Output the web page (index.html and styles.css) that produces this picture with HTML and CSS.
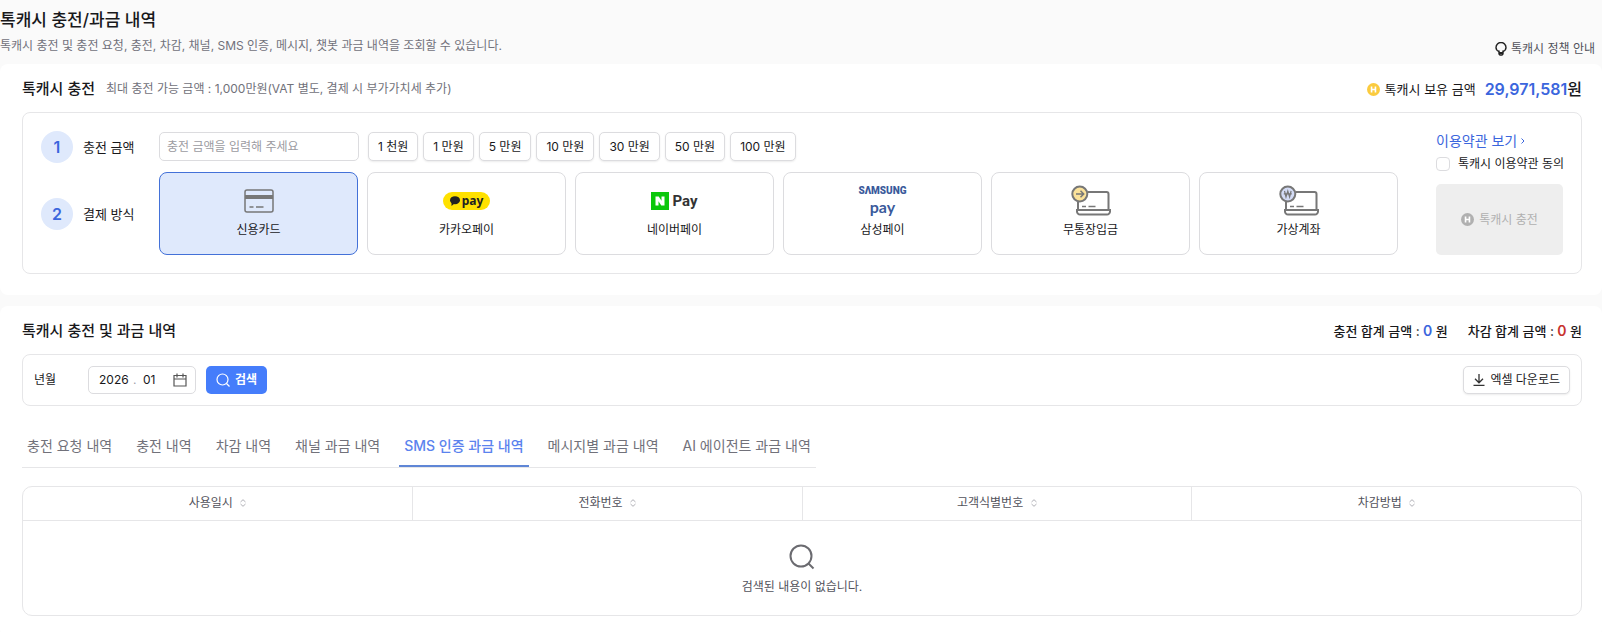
FILE: index.html
```html
<!DOCTYPE html>
<html lang="ko">
<head>
    <meta charset="UTF-8">
    <meta name="viewport" content="width=device-width, initial-scale=1.0">
    <title>톡캐시 충전/과금 내역</title>
    <link rel="stylesheet" href="styles.css">
</head>
<body>

<header class="page-header">
    <div>
        <h1>톡캐시 충전/과금 내역</h1>
        <p>톡캐시 충전 및 충전 요청, 충전, 차감, 채널, SMS 인증, 메시지, 챗봇 과금 내역을 조회할 수 있습니다.</p>
    </div>
    <a href="#" class="policy-link">
        <svg width="12" height="14" viewBox="0 0 12 14" fill="none" stroke="#222" stroke-width="1.4">
            <path d="M4 9.6C2.2 8.8 1 7.300 1 5.500a5 5 0 0 1 10 0c0 1.800-1.200 3.300-3 4.100"/>
            <path d="M4 8.500v3.500l1 1h2l1-1v-3.500"/>
            <path d="M4 11h4" stroke-width="2"/>
        </svg>
        톡캐시 정책 안내
    </a>
</header>

<main>
    <section class="card">
        <div class="card-head">
            <h2>톡캐시 충전</h2>
            <span class="hint">최대 충전 가능 금액 : 1,000만원(VAT 별도, 결제 시 부가가치세 추가)</span>
            <div class="balance">
                <svg width="13" height="13" viewBox="0 0 12 12">
                    <circle cx="6" cy="6" r="6" fill="#fbcb3e"/>
                    <path d="M4.200 3.300v5.400M7.800 3.300v5.400M4.200 6h3.600" stroke="#fff" stroke-width="1.500"/>
                </svg>
                <span>톡캐시 보유 금액</span>
                <strong><em>29,971,581</em>원</strong>
            </div>
        </div>

        <form class="panel charge">
            <div class="charge-steps">
                <div class="step"><span class="step-num">1</span><label for="amount">충전 금액</label></div>
                <div class="amounts">
                    <input type="text" id="amount" class="amount-input" placeholder="충전 금액을 입력해 주세요">
                    <div class="quick">
                        <button type="button" class="btn">1 천원</button>
                        <button type="button" class="btn">1 만원</button>
                        <button type="button" class="btn">5 만원</button>
                        <button type="button" class="btn">10 만원</button>
                        <button type="button" class="btn">30 만원</button>
                        <button type="button" class="btn">50 만원</button>
                        <button type="button" class="btn">100 만원</button>
                    </div>
                </div>

                <div class="step"><span class="step-num">2</span><span>결제 방식</span></div>
                <div class="methods">
                    <label class="method">
                        <input type="radio" name="method" checked>
                        <span class="method-icon">
                            <svg width="30" height="24" viewBox="0 0 30 24" fill="none" stroke="#777">
                                <rect x="1" y="1" width="28" height="22" rx="2" stroke-width="1.500"/>
                                <path d="M1 8h28" stroke-width="4"/>
                                <path d="M5.500 18h4M12 18h7.500" stroke-width="1.500"/>
                            </svg>
                        </span>
                        <span>신용카드</span>
                    </label>
                    <label class="method">
                        <input type="radio" name="method">
                        <span class="method-icon">
                            <span class="kakao">
                                <svg width="10" height="10" viewBox="0 0 10 10" fill="#222">
                                    <ellipse cx="5" cy="4.200" rx="5" ry="4"/>
                                    <path d="M1.500 6v4l3-2.500z"/>
                                </svg>
                                pay
                            </span>
                        </span>
                        <span>카카오페이</span>
                    </label>
                    <label class="method">
                        <input type="radio" name="method">
                        <span class="method-icon">
                            <span class="naver">
                                <svg width="18" height="18" viewBox="0 0 18 18">
                                    <rect width="18" height="18" fill="#0bc70b"/>
                                    <path d="M4.500 4.500h3.200l2.800 4.200V4.500h3v9h-3.200L7.500 9.300v4.200h-3z" fill="#fff"/>
                                </svg>
                                Pay
                            </span>
                        </span>
                        <span>네이버페이</span>
                    </label>
                    <label class="method">
                        <input type="radio" name="method">
                        <span class="method-icon">
                            <span class="samsung"><b>SΛMSUNG</b><i>pay</i></span>
                        </span>
                        <span>삼성페이</span>
                    </label>
                    <label class="method">
                        <input type="radio" name="method">
                        <span class="method-icon">
                            <svg width="40" height="32" viewBox="0 0 40 32" fill="none" stroke="#777" stroke-width="2">
                                <path d="M17 7h18.500a2 2 0 0 1 2 2v15M7 17v7"/>
                                <path d="M6 25h33v1.500a3 3 0 0 1-3 3H9a3 3 0 0 1-3-3z"/>
                                <path d="M11 21.500h4M17.500 21.500h7" stroke-width="1.500"/>
                                <circle cx="8.800" cy="9" r="7.500" fill="#fbe29a"/>
                                <path d="M5 9h7.500M9.500 5.800L12.700 9l-3.200 3.200" stroke-width="1.500"/>
                            </svg>
                        </span>
                        <span>무통장입금</span>
                    </label>
                    <label class="method">
                        <input type="radio" name="method">
                        <span class="method-icon">
                            <svg width="40" height="32" viewBox="0 0 40 32" fill="none" stroke="#777" stroke-width="2">
                                <path d="M17 7h18.500a2 2 0 0 1 2 2v15M7 17v7"/>
                                <path d="M6 25h33v1.500a3 3 0 0 1-3 3H9a3 3 0 0 1-3-3z"/>
                                <path d="M11 21.500h4M17.500 21.500h7" stroke-width="1.500"/>
                                <circle cx="8.800" cy="9" r="7.500" fill="#d3dbf5"/>
                                <path d="M5.500 6l1.500 6 1.800-6 1.800 6 1.500-6M4.800 8.800h8" stroke-width="1.200"/>
                            </svg>
                        </span>
                        <span>가상계좌</span>
                    </label>
                </div>
            </div>

            <div class="agree">
                <a href="#" class="terms-link">이용약관 보기
                    <svg width="4" height="6" viewBox="0 0 4 6" fill="none" stroke="#3b66dd"><path d="M.5.5L3 3 .5 5.500"/></svg>
                </a>
                <label class="agree-check"><input type="checkbox">톡캐시 이용약관 동의</label>
                <button type="submit" class="charge-btn" disabled>
                    <svg width="13" height="13" viewBox="0 0 12 12">
                        <circle cx="6" cy="6" r="6" fill="#b0b0b0"/>
                        <path d="M4.200 3.300v5.400M7.800 3.300v5.400M4.200 6h3.600" stroke="#fff" stroke-width="1.500"/>
                    </svg>
                    톡캐시 충전
                </button>
            </div>
        </form>
    </section>

    <section class="card history">
        <div class="card-head">
            <h2>톡캐시 충전 및 과금 내역</h2>
            <div class="totals">
                <span>충전 합계 금액 : <b class="plus">0</b> 원</span>
                <span>차감 합계 금액 : <b class="minus">0</b> 원</span>
            </div>
        </div>

        <form class="panel search">
            <label for="year" class="search-label">년월</label>
            <div class="month-field">
                <input type="text" id="year" class="year" value="2026">
                <span class="dot">.</span>
                <input type="text" class="month" value="01" aria-label="월">
                <button type="button" aria-label="달력">
                    <svg width="14" height="14" viewBox="0 0 14 14" fill="none" stroke="#555" stroke-width="1.200">
                        <path d="M1 2.500h12v10.500H1zM1 6h12M4 .5v4M10 .5v4"/>
                    </svg>
                </button>
            </div>
            <button type="button" class="search-btn">
                <svg width="14" height="14" viewBox="0 0 14 14" fill="none" stroke="#fff" stroke-width="1.200">
                    <circle cx="6.500" cy="6.500" r="5.500"/><path d="M10.500 10.500l3 3"/>
                </svg>
                검색
            </button>
            <button type="button" class="btn excel-btn">
                <svg width="12" height="12" viewBox="0 0 12 12" fill="none" stroke="#333" stroke-width="1.300">
                    <path d="M6 0v8.500M2 4.800l4 4 4-4M.5 11.300h11"/>
                </svg>
                엑셀 다운로드
            </button>
        </form>

        <nav class="tabs">
            <a href="#">충전 요청 내역</a>
            <a href="#">충전 내역</a>
            <a href="#">차감 내역</a>
            <a href="#">채널 과금 내역</a>
            <a href="#" class="active">SMS 인증 과금 내역</a>
            <a href="#">메시지별 과금 내역</a>
            <a href="#">AI 에이전트 과금 내역</a>
        </nav>

        <div class="table-wrap">
            <table>
                <thead>
                    <tr>
                        <th>사용일시 <svg class="sort" width="6" height="8" viewBox="0 0 6 8"><path d="M.5 3L3 .7 5.500 3M.5 5L3 7.300 5.500 5"/></svg></th>
                        <th>전화번호 <svg class="sort" width="6" height="8" viewBox="0 0 6 8"><path d="M.5 3L3 .7 5.500 3M.5 5L3 7.300 5.500 5"/></svg></th>
                        <th>고객식별번호 <svg class="sort" width="6" height="8" viewBox="0 0 6 8"><path d="M.5 3L3 .7 5.500 3M.5 5L3 7.300 5.500 5"/></svg></th>
                        <th>차감방법 <svg class="sort" width="6" height="8" viewBox="0 0 6 8"><path d="M.5 3L3 .7 5.500 3M.5 5L3 7.300 5.500 5"/></svg></th>
                    </tr>
                </thead>
                <tbody>
                    <tr>
                        <td colspan="4" class="empty">
                            <svg width="26" height="26" viewBox="0 0 26 26" fill="none" stroke="#6b6b70" stroke-width="2">
                                <circle cx="12" cy="12" r="10.500"/><path d="M19.500 19.500l5 5"/>
                            </svg>
                            <p>검색된 내용이 없습니다.</p>
                        </td>
                    </tr>
                </tbody>
            </table>
        </div>
    </section>
</main>

</body>
</html>
```
FILE: styles.css
```css
/* Global styles */
* {
    box-sizing: border-box;
}
body {
    margin: 0;
    background-color: #fafafa;
    color: #18181b;
    font-family: Inter, "Noto Sans CJK KR", sans-serif;
    font-size: 12px;
    line-height: 20px;
}
h1, h2, p {
    margin: 0;
}
h1 {
    font-size: 17px;
    font-weight: 500;
    line-height: 26px;
}
h2 {
    font-size: 15px;
    font-weight: 500;
}
a {
    color: inherit;
    text-decoration: none;
}
input, button {
    font: inherit;
    color: inherit;
}
button {
    cursor: pointer;
}

/* Page header */
.page-header {
    display: flex;
    justify-content: space-between;
    align-items: flex-end;
    padding: 7px 7px 5px 0;
}
.page-header p {
    padding: 3px 0;
    color: #71717a;
}
.policy-link {
    display: flex;
    align-items: center;
    gap: 4px;
    color: #52525b;
}

/* Cards */
.card {
    background-color: #fff;
    border-radius: 8px;
    padding: 15px 20px 21px 22px;
    margin-bottom: 11px;
}
.card-head {
    display: flex;
    align-items: center;
    margin-bottom: 13px;
}
.panel {
    border: 1px solid #e6e6e8;
    border-radius: 8px;
}
.hint {
    margin-left: 11px;
    color: #71717a;
}
.balance {
    display: flex;
    align-items: center;
    gap: 5px;
    margin-left: auto;
    font-size: 13px;
}
.balance strong {
    margin-left: 4px;
    font-size: 16px;
    font-weight: 500;
}
.balance em {
    font-style: normal;
    font-weight: 600;
    color: #3b66dd;
}

/* Charge form */
.charge {
    display: flex;
    gap: 38px;
    padding: 18px;
}
.charge-steps {
    flex: 1;
    display: grid;
    grid-template-columns: 108px 1fr;
    gap: 9px 10px;
    align-items: center;
}
.step {
    display: flex;
    align-items: center;
    gap: 10px;
    font-size: 13px;
}
.step-num {
    width: 32px;
    height: 32px;
    border-radius: 50%;
    background-color: #dfe9fc;
    color: #3b66dd;
    font-size: 16px;
    font-weight: 600;
    line-height: 32px;
    text-align: center;
}
.amounts {
    display: flex;
    gap: 9px;
    padding-bottom: 1px;
}
.amount-input {
    width: 200px;
    height: 29px;
    padding: 0 7px;
    border: 1px solid #dcdcdf;
    border-radius: 5px;
    background-color: #fff;
}
.amount-input::placeholder {
    color: #9b9ba1;
}
.quick {
    display: flex;
    gap: 5px;
}
.btn {
    height: 29px;
    padding: 0 9px;
    border: 1px solid #dcdcdf;
    border-radius: 5px;
    background-color: #fff;
    box-shadow: 0 1px 2px rgba(0, 0, 0, 0.08);
}
.methods {
    display: grid;
    grid-template-columns: repeat(6, 1fr);
    gap: 9px;
}
.method {
    display: flex;
    flex-direction: column;
    align-items: center;
    gap: 1px;
    height: 83px;
    padding-top: 9px;
    border: 1px solid #dcdcdf;
    border-radius: 8px;
    cursor: pointer;
}
.method:has(input:checked) {
    border-color: #4371d8;
    background-color: #dfe9fc;
}
.method input {
    appearance: none;
    width: 0;
    height: 0;
    margin: 0;
}
.method-icon {
    display: flex;
    align-items: center;
    height: 36px;
}
.kakao {
    display: flex;
    align-items: center;
    gap: 2px;
    height: 18px;
    padding: 0 7px;
    border-radius: 9px;
    background-color: #ffe100;
    color: #222;
    font-family: "Noto Sans", sans-serif;
    font-weight: 700;
    line-height: 16px;
}
.naver {
    display: flex;
    align-items: center;
    gap: 3px;
    color: #333;
    font-family: Roboto, sans-serif;
    font-size: 15px;
    font-weight: 700;
}
.samsung {
    display: flex;
    flex-direction: column;
    align-items: center;
    color: #3a5a9b;
}
.samsung b {
    font-family: Roboto, sans-serif;
    font-size: 10px;
    font-weight: 900;
    line-height: 12px;
}
.samsung i {
    font-family: Lato, sans-serif;
    font-size: 16px;
    font-style: normal;
    font-weight: 700;
    line-height: 20px;
}

/* Terms agreement */
.agree {
    display: flex;
    flex-direction: column;
    width: 127px;
}
.terms-link {
    display: flex;
    align-items: center;
    gap: 4px;
    font-size: 14px;
    color: #3b66dd;
}
.agree-check {
    display: flex;
    align-items: center;
    gap: 8px;
    margin: 3px 0 10px;
    white-space: nowrap;
}
.agree-check input {
    appearance: none;
    flex-shrink: 0;
    width: 14px;
    height: 14px;
    margin: 0;
    border: 1px solid #dcdcdf;
    border-radius: 4px;
}
.charge-btn {
    display: flex;
    flex: 1;
    align-items: center;
    justify-content: center;
    gap: 5px;
    border: 0;
    border-radius: 5px;
    background-color: #eee;
    color: #b0b0b0;
}

/* History */
.history {
    margin-bottom: 0;
}
.totals {
    display: flex;
    gap: 20px;
    margin-left: auto;
    font-size: 13px;
    font-weight: 500;
}
.totals b {
    font-size: 14px;
    font-weight: 600;
}
.plus {
    color: #3b66dd;
}
.minus {
    color: #c8322e;
}
.search {
    display: flex;
    align-items: center;
    padding: 11px;
}
.search-label {
    width: 54px;
}
.month-field {
    display: flex;
    align-items: center;
    width: 108px;
    height: 28px;
    padding: 0 8px 0 10px;
    border: 1px solid #dcdcdf;
    border-radius: 5px;
}
.month-field input {
    padding: 0;
    border: 0;
    background: none;
}
.year {
    width: 34px;
}
.month {
    width: 20px;
}
.dot {
    width: 10px;
    color: #a1a1aa;
}
.month-field button {
    display: flex;
    margin-left: auto;
    padding: 0;
    border: 0;
    background: none;
}
.search-btn, .excel-btn {
    display: flex;
    align-items: center;
    gap: 5px;
    height: 28px;
    padding: 0 10px;
}
.search-btn {
    margin-left: 10px;
    border: 0;
    border-radius: 5px;
    background-color: #457dfb;
    color: #fff;
    font-weight: 600;
}
.excel-btn {
    margin-left: auto;
    padding: 0 9px;
}

/* Tabs */
.tabs {
    display: inline-flex;
    gap: 14px;
    margin-top: 18px;
    border-bottom: 1px solid #e6e6e8;
    font-size: 14px;
    color: #71717a;
}
.tabs a {
    padding: 12px 5px 9px;
    border-bottom: 2px solid transparent;
}
.tabs .active {
    border-color: #5f86d6;
    color: #5b83ee;
    font-weight: 500;
}

/* Table */
.table-wrap {
    margin-top: 18px;
    border: 1px solid #e6e6e8;
    border-radius: 10px;
}
table {
    width: 100%;
    border-collapse: collapse;
    table-layout: fixed;
}
th {
    height: 33px;
    padding: 0;
    border-bottom: 1px solid #e6e6e8;
    color: #52525b;
    font-weight: 400;
}
th + th {
    border-left: 1px solid #e6e6e8;
}
.sort {
    margin-left: 4px;
    fill: none;
    stroke: #b0b0b6;
}
.empty {
    padding: 23px 0 18px;
    text-align: center;
    color: #52525b;
}
.empty svg {
    display: block;
    margin: 0 auto 7px;
}
```
